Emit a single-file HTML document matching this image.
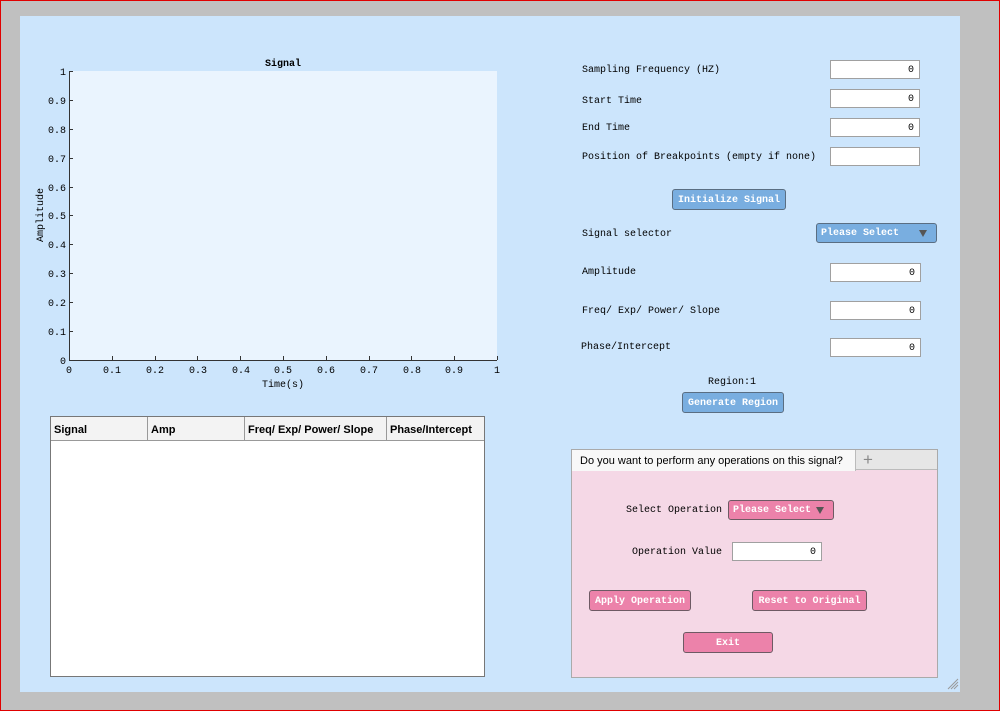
<!DOCTYPE html>
<html><head><style>
*{margin:0;padding:0;box-sizing:border-box}
body{width:1000px;height:711px;background:#c0c0c0;position:relative;overflow:hidden;font-family:"Liberation Mono",monospace;font-size:10px;color:#000}
.frame{position:absolute;left:0;top:0;width:1000px;height:711px;border:1px solid #e00000}
.panel{position:absolute;left:20px;top:16px;width:940px;height:676px;background:#cce5fc}
.a{position:absolute;white-space:nowrap}
.inp{position:absolute;background:#fff;border:1px solid #a0a0a0;height:19px;text-align:right;padding-right:5px;line-height:20px;font-size:10px}
.btn{position:absolute;border:1px solid #5a6e82;border-radius:3px;background:#79aee0;color:#fff;font-weight:bold;text-align:center;font-size:10px}
.pbtn{position:absolute;border:1px solid #6e5a64;border-radius:3px;background:#ec82aa;color:#fff;font-weight:bold;text-align:center;font-size:10px}
.tri{display:inline-block;width:0;height:0;border-left:4px solid transparent;border-right:4px solid transparent;border-top:7px solid #555;vertical-align:middle}
</style></head><body>
<div class="frame"></div>
<div class="panel"></div>
<svg class="a" style="left:0;top:0" width="1000" height="711" font-family="Liberation Mono, monospace" font-size="10">
<rect x="69" y="71" width="428" height="289" fill="#eaf4fe"/>
<text x="283" y="66" text-anchor="middle" font-weight="bold">Signal</text>
<line x1="69.5" y1="71" x2="69.5" y2="360" stroke="#333"/>
<line x1="69" y1="360.5" x2="497" y2="360.5" stroke="#333"/>
<g stroke="#333">
<line x1="69" y1="71.5" x2="73" y2="71.5"/><line x1="69" y1="100.5" x2="73" y2="100.5"/><line x1="69" y1="129.5" x2="73" y2="129.5"/><line x1="69" y1="158.5" x2="73" y2="158.5"/><line x1="69" y1="187.5" x2="73" y2="187.5"/><line x1="69" y1="215.5" x2="73" y2="215.5"/><line x1="69" y1="244.5" x2="73" y2="244.5"/><line x1="69" y1="273.5" x2="73" y2="273.5"/><line x1="69" y1="302.5" x2="73" y2="302.5"/><line x1="69" y1="331.5" x2="73" y2="331.5"/>
<line x1="112.5" y1="356" x2="112.5" y2="360"/><line x1="155.5" y1="356" x2="155.5" y2="360"/><line x1="197.5" y1="356" x2="197.5" y2="360"/><line x1="240.5" y1="356" x2="240.5" y2="360"/><line x1="283.5" y1="356" x2="283.5" y2="360"/><line x1="326.5" y1="356" x2="326.5" y2="360"/><line x1="369.5" y1="356" x2="369.5" y2="360"/><line x1="411.5" y1="356" x2="411.5" y2="360"/><line x1="454.5" y1="356" x2="454.5" y2="360"/><line x1="497.5" y1="356" x2="497.5" y2="360"/>
</g>
<g text-anchor="end">
<text x="66" y="75">1</text><text x="66" y="104">0.9</text><text x="66" y="133">0.8</text><text x="66" y="162">0.7</text><text x="66" y="191">0.6</text><text x="66" y="219">0.5</text><text x="66" y="248">0.4</text><text x="66" y="277">0.3</text><text x="66" y="306">0.2</text><text x="66" y="335">0.1</text><text x="66" y="364">0</text>
</g>
<g text-anchor="middle">
<text x="69" y="373">0</text><text x="112" y="373">0.1</text><text x="155" y="373">0.2</text><text x="198" y="373">0.3</text><text x="241" y="373">0.4</text><text x="283" y="373">0.5</text><text x="326" y="373">0.6</text><text x="369" y="373">0.7</text><text x="412" y="373">0.8</text><text x="454" y="373">0.9</text><text x="497" y="373">1</text>
<text x="283" y="387">Time(s)</text>
<text transform="translate(43,215) rotate(-90)">Amplitude</text>
</g>
<g stroke="#999" stroke-width="1"><line x1="948" y1="689" x2="958" y2="679"/><line x1="951" y1="689" x2="958" y2="682"/><line x1="954" y1="689" x2="958" y2="685"/></g>
</svg>

<!-- table -->
<div class="a" style="left:50px;top:416px;width:435px;height:261px;background:#fff;border:1px solid #777"></div>
<div class="a" style="left:51px;top:417px;width:433px;height:24px;background:#f3f3f3;border-bottom:1px solid #999;font-family:'Liberation Sans',sans-serif;font-size:11px;font-weight:bold">
<div class="a" style="left:0;top:0;width:97px;height:23px;border-right:1px solid #999;padding:7px 3px 0">Signal</div>
<div class="a" style="left:97px;top:0;width:97px;height:23px;border-right:1px solid #999;padding:7px 3px 0">Amp</div>
<div class="a" style="left:194px;top:0;width:142px;height:23px;border-right:1px solid #999;padding:7px 3px 0">Freq/ Exp/ Power/ Slope</div>
<div class="a" style="left:336px;top:0;width:97px;height:23px;padding:7px 3px 0">Phase/Intercept</div>
</div>

<!-- right form -->
<div class="a" style="left:582px;top:65px">Sampling Frequency (HZ)</div>
<div class="inp" style="left:830px;top:60px;width:90px">0</div>
<div class="a" style="left:582px;top:96px">Start Time</div>
<div class="inp" style="left:830px;top:89px;width:90px">0</div>
<div class="a" style="left:582px;top:123px">End Time</div>
<div class="inp" style="left:830px;top:118px;width:90px">0</div>
<div class="a" style="left:582px;top:152px">Position of Breakpoints (empty if none)</div>
<div class="inp" style="left:830px;top:147px;width:90px"></div>
<div class="btn" style="left:672px;top:189px;width:114px;height:21px;line-height:21px">Initialize Signal</div>
<div class="a" style="left:582px;top:229px">Signal selector</div>
<div class="btn" style="left:816px;top:223px;width:121px;height:20px;line-height:20px;text-align:left;padding-left:4px">Please Select<span class="tri" style="position:absolute;right:9px;top:6px"></span></div>
<div class="a" style="left:582px;top:267px">Amplitude</div>
<div class="inp" style="left:830px;top:263px;width:91px">0</div>
<div class="a" style="left:582px;top:306px">Freq/ Exp/ Power/ Slope</div>
<div class="inp" style="left:830px;top:301px;width:91px">0</div>
<div class="a" style="left:581px;top:342px">Phase/Intercept</div>
<div class="inp" style="left:830px;top:338px;width:91px">0</div>
<div class="a" style="left:708px;top:377px">Region:1</div>
<div class="btn" style="left:682px;top:392px;width:102px;height:21px;line-height:21px">Generate Region</div>

<!-- tab panel -->
<div class="a" style="left:571px;top:449px;width:367px;height:229px;background:#f5d8e6;border:1px solid #aaa"></div>
<div class="a" style="left:572px;top:450px;width:365px;height:20px;background:#e6e6e6;border-bottom:1px solid #bbb"></div>
<div class="a" style="left:572px;top:450px;width:284px;height:21px;background:#f8f8f8;border-right:1px solid #bbb;font-family:'Liberation Sans',sans-serif;font-size:11px;padding:3px 8px;line-height:16px">Do you want to perform any operations on this signal?</div>
<div class="a" style="left:863px;top:450px;font-family:'Liberation Sans',sans-serif;font-size:17px;color:#888;line-height:20px">+</div>
<div class="a" style="left:626px;top:505px">Select Operation</div>
<div class="pbtn" style="left:728px;top:500px;width:106px;height:20px;line-height:20px;text-align:left;padding-left:4px">Please Select<span class="tri" style="position:absolute;right:9px;top:6px"></span></div>
<div class="a" style="left:632px;top:547px">Operation Value</div>
<div class="inp" style="left:732px;top:542px;width:90px">0</div>
<div class="pbtn" style="left:589px;top:590px;width:102px;height:21px;line-height:21px">Apply Operation</div>
<div class="pbtn" style="left:752px;top:590px;width:115px;height:21px;line-height:21px">Reset to Original</div>
<div class="pbtn" style="left:683px;top:632px;width:90px;height:21px;line-height:21px">Exit</div>
</body></html>
